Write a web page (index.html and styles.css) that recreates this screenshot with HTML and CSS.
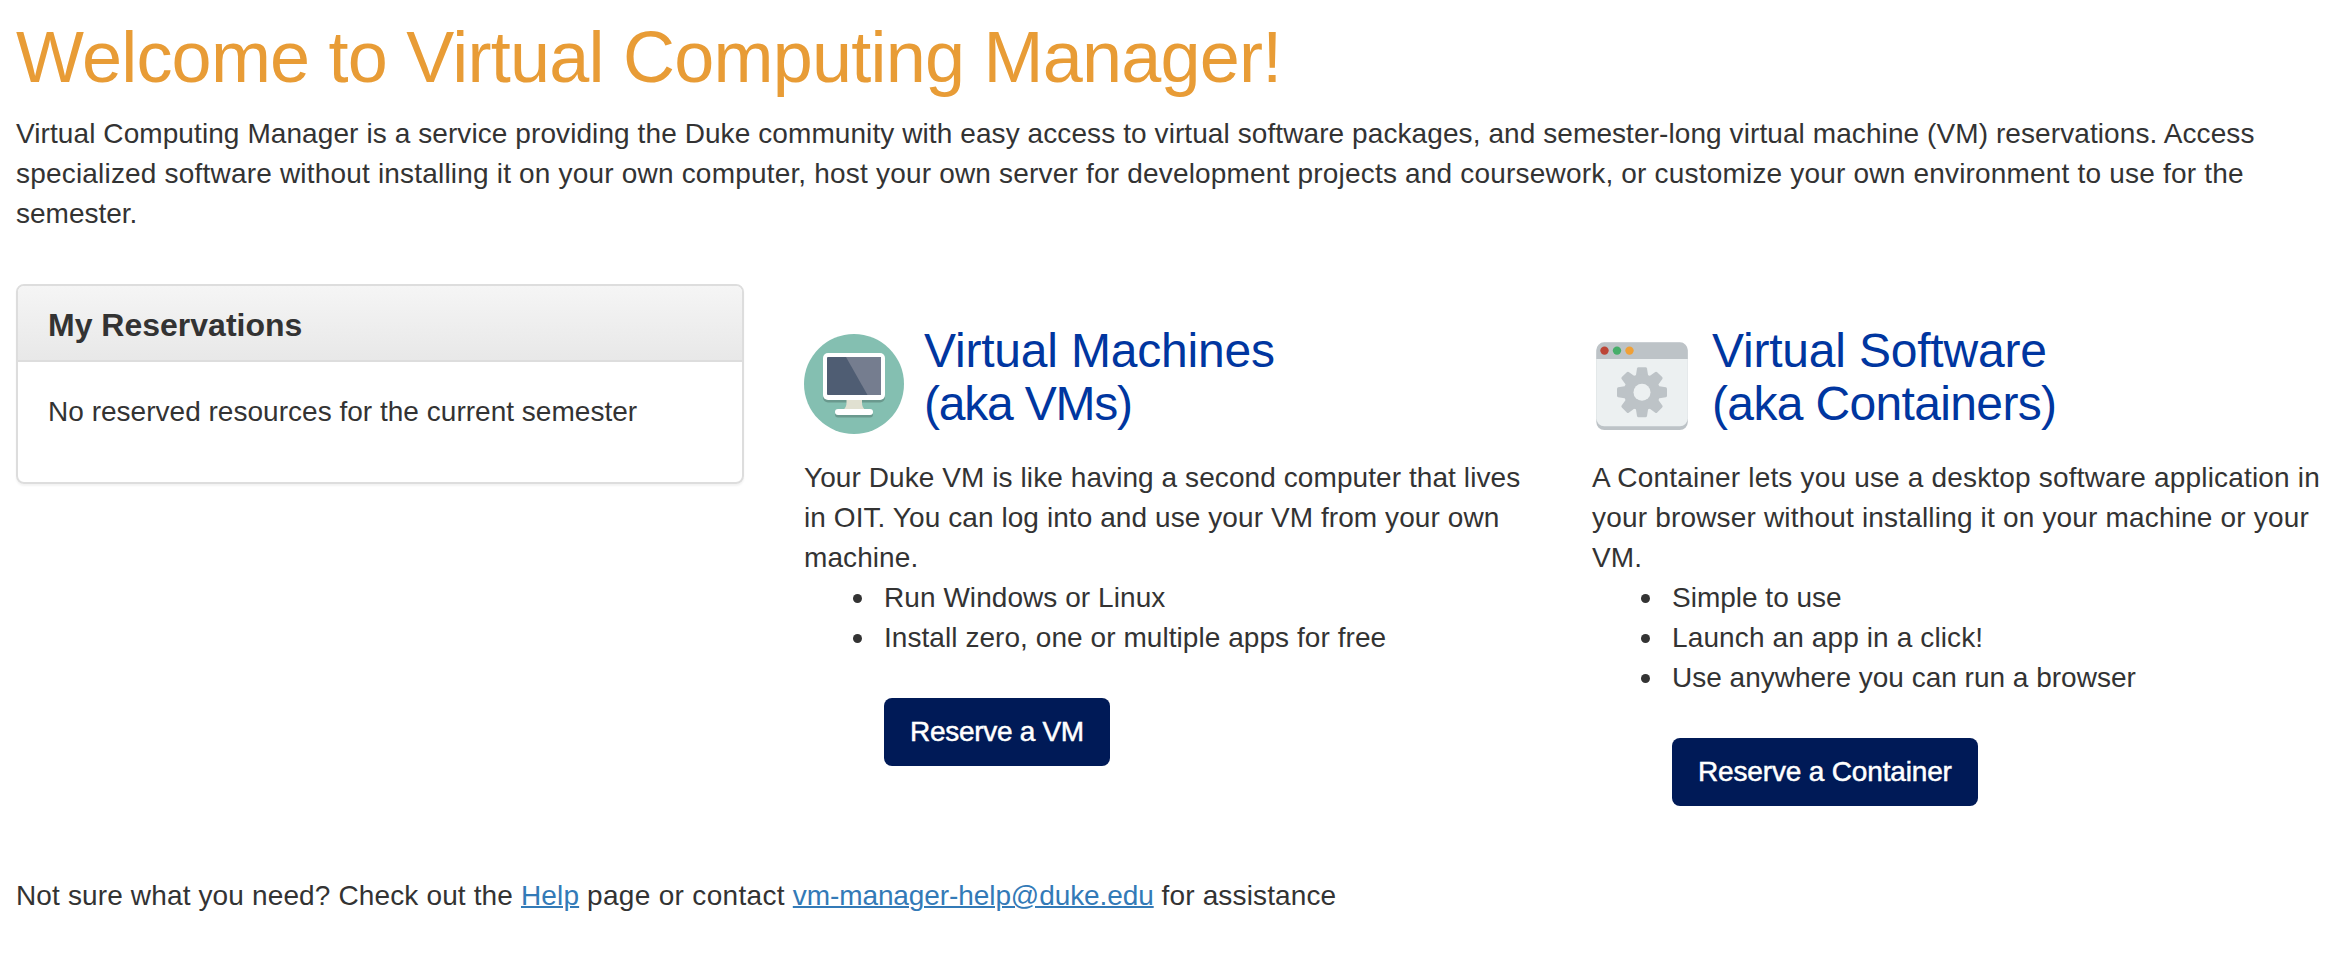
FILE: index.html
```html
<!DOCTYPE html>
<html lang="en">
<head>
<meta charset="utf-8">
<title>Virtual Computing Manager</title>
<link rel="stylesheet" href="styles.css">
</head>
<body>
<main class="page">
  <h1 class="title">Welcome to Virtual Computing Manager!</h1>
  <p class="intro"><span class="intro-first">Virtual Computing Manager is a service providing the Duke community with easy access to virtual software packages, and semester-long virtual machine (VM) reservations. Access</span><br><span class="intro-second">specialized software without installing it on your own computer, host your own server for development projects and coursework, or customize your own environment to use for the</span><br>semester.</p>
  <div class="columns">
    <section class="panel">
      <h2 class="panel-heading">My Reservations</h2>
      <div class="panel-body">No reserved resources for the current semester</div>
    </section>
    <section class="service service-vm">
      <div class="service-head">
        <svg class="icon" viewBox="0 0 100 100" aria-hidden="true">
          <circle cx="50" cy="50" r="50" fill="#84bfb1"/>
          <rect x="19" y="21.5" width="62" height="47" rx="5" fill="#6a998e"/>
          <path d="M42.5 65h15.500v4q0 5 4 7.500H38.500q4-2.500 4-7.500z" fill="#e0e0d1"/>
          <rect x="19" y="19" width="62" height="47" rx="5" fill="#fff"/>
          <rect x="23" y="23" width="54" height="38" rx="1" fill="#4f5d73"/>
          <path d="M42 23h34q1 0 1 1v36q0 1-1 1H63.500z" fill="#757d8f"/>
          <rect x="31" y="77.500" width="38" height="6" rx="3" fill="#6a998e"/>
          <rect x="31" y="75" width="38" height="6" rx="3" fill="#fff"/>
        </svg>
        <h2 class="service-title">Virtual Machines<br><span class="aka">(aka VMs)</span></h2>
      </div>
      <p class="text">Your Duke VM is like having a second computer that lives<br>in OIT. You can log into and use your VM from your own<br>machine.</p>
      <ul class="list">
        <li>Run Windows or Linux</li>
        <li>Install zero, one or multiple apps for free</li>
      </ul>
      <a class="button">Reserve a VM</a>
    </section>
    <section class="service service-container">
      <div class="service-head">
        <svg class="icon" viewBox="0 0 100 100" aria-hidden="true">
          <rect x="4.300" y="12" width="91.500" height="84" rx="8" fill="#bdc3c7"/>
          <rect x="4.300" y="8.300" width="91.500" height="84" rx="8" fill="#ecf0f1"/>
          <path d="M4.300 25V16.300a8 8 0 0 1 8-8h75.500a8 8 0 0 1 8 8V25z" fill="#bdc3c7"/>
          <circle cx="12.500" cy="16.600" r="4.200" fill="#bc4536"/>
          <circle cx="25" cy="16.600" r="4.200" fill="#46ae6a"/>
          <circle cx="37.500" cy="16.600" r="4.200" fill="#f0a036"/>
          <g fill="#bdc3c7">
            <path id="tooth" d="M43.500 44L45 34.500Q45.200 33.300 46.500 33.300H53.500Q54.800 33.300 55 34.500L56.500 44Z"/>
            <use href="#tooth" transform="rotate(45 50 58.300)"/>
            <use href="#tooth" transform="rotate(90 50 58.300)"/>
            <use href="#tooth" transform="rotate(135 50 58.300)"/>
            <use href="#tooth" transform="rotate(180 50 58.300)"/>
            <use href="#tooth" transform="rotate(225 50 58.300)"/>
            <use href="#tooth" transform="rotate(270 50 58.300)"/>
            <use href="#tooth" transform="rotate(315 50 58.300)"/>
            <circle cx="50" cy="58.300" r="18.200"/>
          </g>
          <circle cx="50" cy="58.300" r="8.500" fill="#ecf0f1"/>
        </svg>
        <h2 class="service-title">Virtual Software<br><span class="aka">(aka Containers)</span></h2>
      </div>
      <p class="text">A Container lets you use a desktop software application in<br>your browser without installing it on your machine or your<br>VM.</p>
      <ul class="list">
        <li>Simple to use</li>
        <li class="click">Launch an app in a click!</li>
        <li>Use anywhere you can run a browser</li>
      </ul>
      <a class="button">Reserve a Container</a>
    </section>
  </div>
  <p class="footer">Not sure what you need? Check out the <a class="link">Help</a> <span class="contact">page or contact</span> <a class="link email">vm-manager-help@duke.edu</a> for assistance</p>
</main>
</body>
</html>
```
FILE: styles.css
```css
* { box-sizing: border-box; }
body {
  margin: 0;
  background: #fff;
  color: #333;
  font: 28px/40px "Liberation Sans", Arial, sans-serif;
}
h1, h2, p, ul { margin: 0; padding: 0; font-weight: 400; }
.page { padding: 18px 16px 0; white-space: nowrap; }
.title { color: #e89c36; font-size: 72px; line-height: 79px; letter-spacing: -.77px; }
.intro { margin-top: 17px; }
.intro-first { letter-spacing: .087px; }
.intro-second { letter-spacing: .19px; }
.columns {
  display: grid;
  grid-template-columns: 728px 728px 728px;
  column-gap: 60px;
  align-items: start;
  height: 592px;
  margin-top: 50px;
}
.panel {
  height: 200px;
  border: 2px solid #ddd;
  border-radius: 8px;
  box-shadow: 0 2px 2px rgba(0, 0, 0, .05);
}
.panel-heading {
  height: 76px;
  padding: 19px 30px 0;
  border-bottom: 2px solid #ddd;
  border-radius: 6px 6px 0 0;
  background: linear-gradient(#f5f5f5, #e8e8e8);
  font-size: 32px;
  font-weight: 700;
  line-height: 40px;
}
.panel-body { padding: 30px; letter-spacing: .02px; }
.service { padding-top: 41px; }
.service-head { display: flex; gap: 20px; height: 117px; }
.icon { flex: none; width: 100px; height: 100px; margin-top: 9px; }
.service-title { color: #0036a0; font-size: 48px; line-height: 52.8px; letter-spacing: -.2px; }
.service-vm .aka { letter-spacing: -1.2px; }
.service-container .aka { letter-spacing: -.65px; }
.text { margin-top: 16px; }
.service-vm .text { letter-spacing: .08px; }
.service-container .text { letter-spacing: .18px; }
.list { padding-left: 80px; list-style: none; }
.service-vm .list { letter-spacing: .06px; }
.service-container .click { letter-spacing: .12px; }
.list li::before {
  content: "";
  display: inline-block;
  width: 9px;
  height: 9px;
  margin: 0 22px 4px -31px;
  border-radius: 50%;
  background: #333;
  vertical-align: baseline;
}
.button {
  display: inline-block;
  height: 68px;
  margin: 40px 0 0 80px;
  padding: 14px 26px;
  border-radius: 8px;
  background: #001a57;
  color: #fff;
  letter-spacing: -.3px;
  -webkit-text-stroke: .5px #fff;
}
.service-container .button { letter-spacing: -.16px; }
.footer { letter-spacing: .14px; }
.contact { letter-spacing: .32px; }
.email { letter-spacing: -.09px; }
.link { color: #337ab7; text-decoration: underline; text-decoration-thickness: 2px; }
```
